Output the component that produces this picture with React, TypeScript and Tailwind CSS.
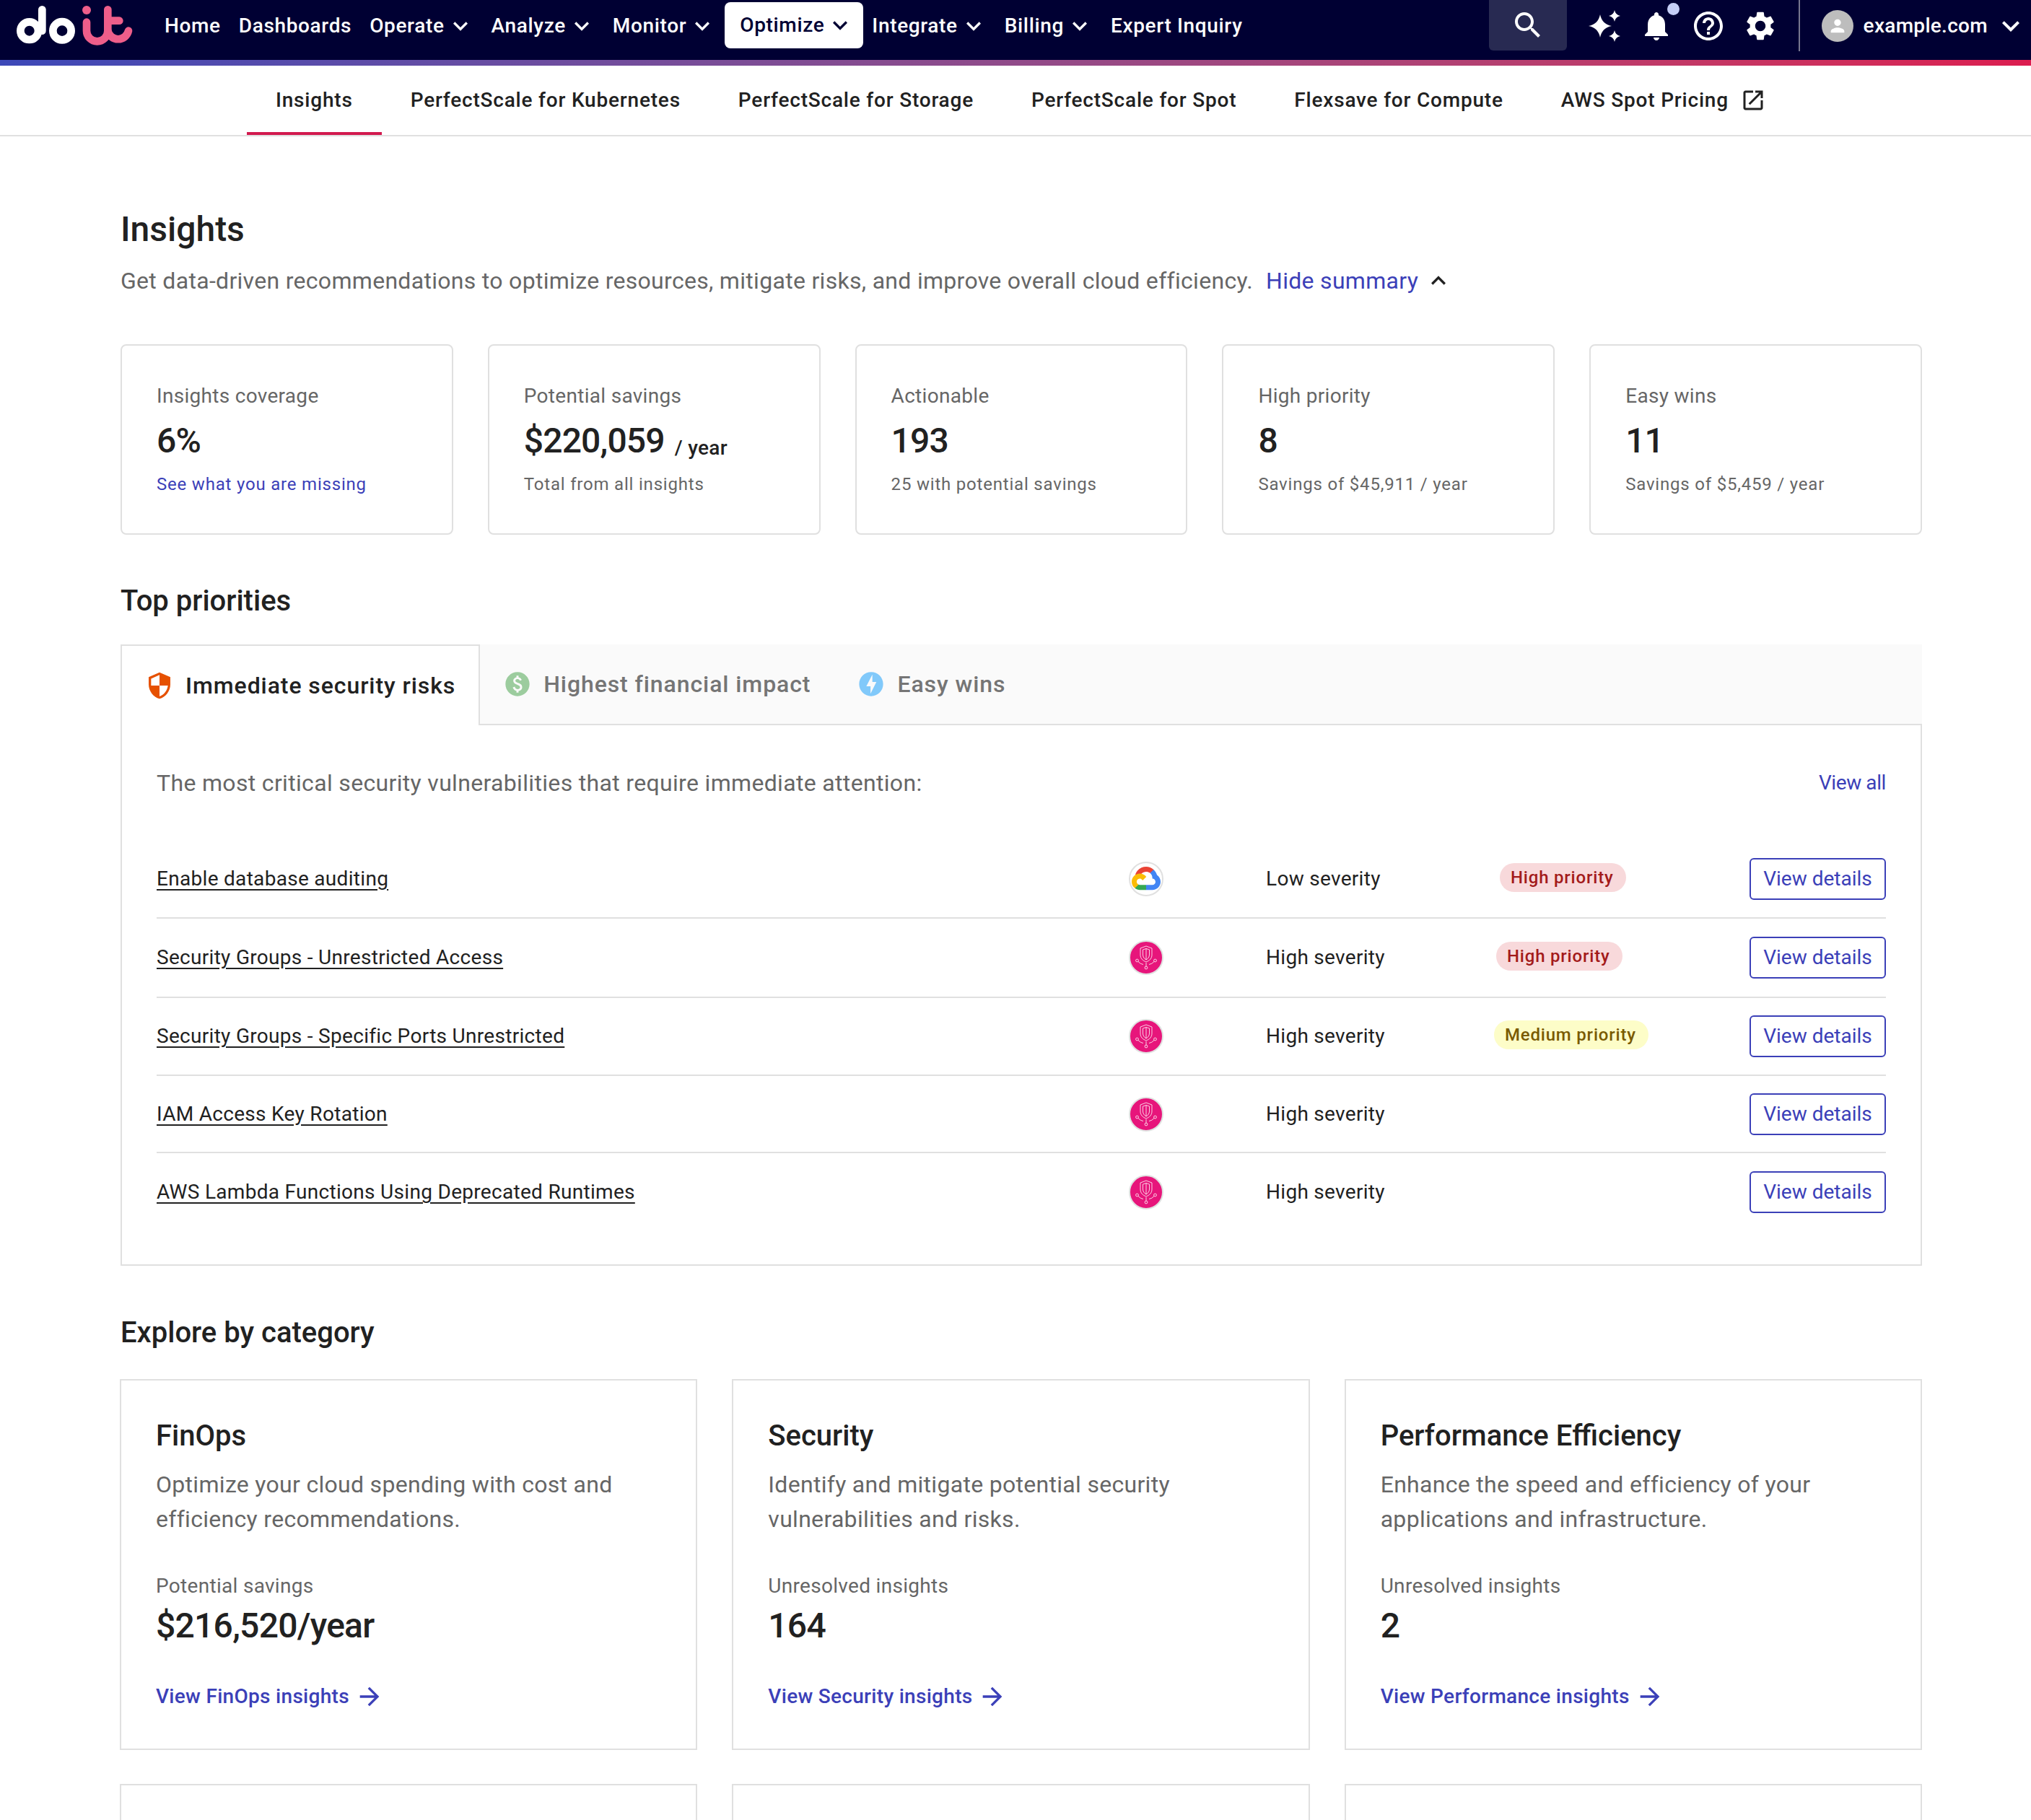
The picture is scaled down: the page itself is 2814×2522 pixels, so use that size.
import type { ReactNode } from "react"

const paths = {
  chevronDown: "M7.41 8.59 12 13.17l4.59-4.58L18 10l-6 6-6-6z",
  chevronUp: "M7.41 15.41 12 10.83l4.59 4.58L18 14l-6-6-6 6z",
  search:
    "M15.5 14h-.79l-.28-.27C15.41 12.59 16 11.11 16 9.5 16 5.91 13.09 3 9.5 3S3 5.91 3 9.5 5.91 16 9.5 16c1.61 0 3.09-.59 4.23-1.57l.27.28v.79l5 4.99L20.49 19zm-6 0C7.01 14 5 11.99 5 9.5S7.01 5 9.5 5 14 7.01 14 9.5 11.99 14 9.5 14",
  bell: "M12 22c1.1 0 2-.9 2-2h-4c0 1.1.89 2 2 2m6-6v-5c0-3.07-1.64-5.64-4.5-6.32V4c0-.83-.67-1.5-1.5-1.5s-1.5.67-1.5 1.5v.68C7.63 5.36 6 7.92 6 11v5l-2 2v1h16v-1z",
  help: "M11 18h2v-2h-2zm1-16C6.48 2 2 6.48 2 12s4.48 10 10 10 10-4.48 10-10S17.52 2 12 2m0 18c-4.41 0-8-3.59-8-8s3.59-8 8-8 8 3.59 8 8-3.59 8-8 8m0-14c-2.21 0-4 1.79-4 4h2c0-1.1.9-2 2-2s2 .9 2 2c0 2-3 1.75-3 5h2c0-2.25 3-2.5 3-5 0-2.21-1.79-4-4-4",
  gear: "M19.14 12.94c.04-.3.06-.61.06-.94 0-.32-.02-.64-.07-.94l2.03-1.58c.18-.14.23-.41.12-.61l-1.92-3.32c-.12-.22-.37-.29-.59-.22l-2.39.96c-.5-.38-1.03-.7-1.62-.94l-.36-2.54c-.04-.24-.24-.41-.48-.41h-3.84c-.24 0-.43.17-.47.41l-.36 2.54c-.59.24-1.13.57-1.62.94l-2.39-.96c-.22-.08-.47 0-.59.22L2.74 8.87c-.12.21-.08.47.12.61l2.03 1.58c-.05.3-.09.63-.09.94s.02.64.07.94l-2.03 1.58c-.18.14-.23.41-.12.61l1.92 3.32c.12.22.37.29.59.22l2.39-.96c.5.38 1.03.7 1.62.94l.36 2.54c.05.24.24.41.48.41h3.84c.24 0 .44-.17.47-.41l.36-2.54c.59-.24 1.13-.56 1.62-.94l2.39.96c.22.08.47 0 .59-.22l1.92-3.32c.12-.22.07-.47-.12-.61zM12 15.6c-1.98 0-3.6-1.62-3.6-3.6s1.62-3.6 3.6-3.6 3.6 1.62 3.6 3.6-1.62 3.6-3.6 3.6",
  person: "M12 12c2.21 0 4-1.79 4-4s-1.79-4-4-4-4 1.79-4 4 1.79 4 4 4m0 2c-2.67 0-8 1.34-8 4v2h16v-2c0-2.66-5.33-4-8-4",
  external: "M19 19H5V5h7V3H5c-1.11 0-2 .9-2 2v14c0 1.1.89 2 2 2h14c1.1 0 2-.9 2-2v-7h-2zM14 3v2h3.59l-9.83 9.83 1.41 1.41L19 6.41V10h2V3z",
  arrow: "M12 4l-1.41 1.41L16.17 11H4v2h12.17l-5.58 5.59L12 20l8-8z",
  shield: "M12 1 3 5v6c0 5.55 3.84 10.74 9 12 5.16-1.26 9-6.45 9-12V5zm0 10.99h7c-.53 4.12-3.28 7.79-7 8.94V12H5V6.3l7-3.11z",
  paid: "M12 2C6.48 2 2 6.48 2 12s4.48 10 10 10 10-4.48 10-10S17.52 2 12 2m.88 15.76V19h-1.75v-1.29c-.74-.18-2.39-.77-3.02-2.96l1.65-.67c.06.22.58 2.09 2.4 2.09.93 0 1.98-.48 1.98-1.61 0-.96-.7-1.46-2.28-2.03-1.1-.39-3.35-1.03-3.35-3.31 0-.1.01-2.4 2.62-2.96V5h1.75v1.24c1.84.32 2.51 1.79 2.66 2.24l-1.58.67c-.11-.35-.59-1.34-1.9-1.34-.7 0-1.81.37-1.81 1.39 0 .95.86 1.31 2.64 1.9 2.4.83 3.01 2.05 3.01 3.45 0 2.63-2.5 3.13-3.02 3.22",
  bolt: "M12 2.02c-5.51 0-9.98 4.47-9.98 9.98s4.47 9.98 9.98 9.98 9.98-4.47 9.98-9.98S17.51 2.02 12 2.02M11.48 20v-6.26H8L13 4v6.26h3.35z",
}

function Icon({ d, className }: { d: string; className: string }) {
  return (
    <svg viewBox="0 0 24 24" fill="currentColor" className={className}>
      <path d={d} />
    </svg>
  )
}

function Logo() {
  return (
    <svg viewBox="0 0 570 228" className="h-[76px] w-[190px]" fill="none" strokeLinecap="round" strokeWidth="32">
      <g stroke="#ffffff">
        <circle cx="92" cy="128" r="37" />
        <path d="M145 40V128" />
        <circle cx="228" cy="128" r="38" />
      </g>
      <circle cx="330" cy="42" r="18" fill="#ee5e8a" />
      <g stroke="#ee5e8a">
        <path d="M330 92V128a44 44 0 0 0 88 0V40" />
        <path d="M418 86H466" />
        <path d="M418 128a44 44 0 0 0 86 0" />
      </g>
    </svg>
  )
}

function Sparkles() {
  const star = (x: number, y: number, r: number) => {
    const c = r * 0.16
    return `M${x} ${y - r}Q${x + c} ${y - c} ${x + r} ${y}Q${x + c} ${y + c} ${x} ${y + r}Q${x - c} ${y + c} ${x - r} ${y}Q${x - c} ${y - c} ${x} ${y - r}Z`
  }
  return (
    <svg viewBox="0 0 48 48" fill="#ffffff" className="h-[48px] w-[48px]">
      <path d={star(18, 24, 16)} />
      <path d={star(38, 10, 8)} />
      <path d={star(38, 38, 8)} />
    </svg>
  )
}

function GoogleCloud() {
  return (
    <div className="flex h-[48px] w-[48px] items-center justify-center rounded-full border-2 border-[#e0e0e0] bg-white">
      <svg viewBox="0 0 256 206" className="w-[40px]">
        <path fill="#ea4335" d="M170.25 56.82l22.25-22.25 1.49-9.37C153.44-11.68 88.98-7.5 52.42 33.92 42.27 45.42 34.73 59.76 30.72 74.57l7.97-1.12 44.5-7.34 3.44-3.51c19.8-21.74 53.27-24.67 76.13-6.17z" />
        <path fill="#4285f4" d="M224.2 73.92c-5.11-18.84-15.62-35.77-30.22-48.72l-31.23 31.23c13.19 10.78 20.7 27.01 20.38 44.04v5.54c15.35 0 27.8 12.45 27.8 27.8 0 15.35-12.45 27.48-27.8 27.48h-55.67l-5.47 5.93v33.34l5.47 5.23h55.67c39.93.31 72.55-31.49 72.86-71.42.19-24.2-11.74-46.89-31.79-60.45" />
        <path fill="#34a853" d="M71.87 205.8h55.59v-44.51H71.87c-3.96 0-7.8-.85-11.4-2.5l-7.89 2.42-22.41 22.25-1.95 7.57c12.57 9.49 27.9 14.83 43.65 14.77" />
        <path fill="#fbbc05" d="M71.87 61.43C31.94 61.66-.24 94.23 0 134.16c.13 22.3 10.55 43.29 28.22 56.88l32.25-32.25c-13.99-6.32-20.21-22.79-13.89-36.78 6.32-13.99 22.79-20.21 36.78-13.89 6.16 2.79 11.1 7.72 13.89 13.89l32.25-32.25c-13.72-17.94-35.04-28.42-57.62-28.34" />
      </svg>
    </div>
  )
}

function SecurityHub() {
  return (
    <div className="flex h-[48px] w-[48px] items-center justify-center rounded-full border-2 border-[#e0e0e0] bg-[#e7157b]">
      <svg viewBox="0 0 44 44" className="h-[44px] w-[44px]" fill="none" stroke="#ffffff" strokeWidth="0.8">
        <path d="M14 9L22 6L30 9V18C30 23 27 26 22 28C17 26 14 23 14 18Z" />
        <path d="M17.500 11L22 9.500L26.500 11V18C26.500 21 24.500 23.500 22 25C19.500 23.500 17.500 21 17.500 18Z" />
        <path d="M22 9.500V25" />
        <path d="M11 27.500Q14 31 18 31.500M33 27.500Q30 31 26 31.500M22 29V34" />
        <circle cx="9.500" cy="26" r="1.900" />
        <circle cx="34.500" cy="26" r="1.900" />
        <circle cx="22" cy="36" r="1.900" />
      </svg>
    </div>
  )
}

const navItems = [
  { label: "Home" },
  { label: "Dashboards" },
  { label: "Operate", menu: true },
  { label: "Analyze", menu: true },
  { label: "Monitor", menu: true },
  { label: "Optimize", menu: true, active: true },
  { label: "Integrate", menu: true },
  { label: "Billing", menu: true },
  { label: "Expert Inquiry" },
]

const subTabs = ["PerfectScale for Kubernetes", "PerfectScale for Storage", "PerfectScale for Spot", "Flexsave for Compute"]

const stats: { label: string; value: string; unit?: string; note: string; link?: boolean }[] = [
  { label: "Insights coverage", value: "6%", note: "See what you are missing", link: true },
  { label: "Potential savings", value: "$220,059", unit: "/ year", note: "Total from all insights" },
  { label: "Actionable", value: "193", note: "25 with potential savings" },
  { label: "High priority", value: "8", note: "Savings of $45,911 / year" },
  { label: "Easy wins", value: "11", note: "Savings of $5,459 / year" },
]

const risks = [
  { name: "Enable database auditing", gcp: true, severity: "Low severity", priority: "High priority", chip: "ml-[8px] bg-[#f8d9db] text-[#a31a1a]", row: "h-[109px]" },
  { name: "Security Groups - Unrestricted Access", severity: "High severity", priority: "High priority", chip: "ml-[3px] bg-[#f8d9db] text-[#a31a1a]", row: "h-[110px]" },
  { name: "Security Groups - Specific Ports Unrestricted", severity: "High severity", priority: "Medium priority", chip: "bg-[#fdfdc8] text-[#7a5a00]", row: "h-[108px]" },
  { name: "IAM Access Key Rotation", severity: "High severity", row: "h-[107px]" },
  { name: "AWS Lambda Functions Using Deprecated Runtimes", severity: "High severity", row: "h-[108px]" },
]

const categories = [
  { title: "FinOps", text: ["Optimize your cloud spending with cost and", "efficiency recommendations."], label: "Potential savings", value: "$216,520/year", link: "View FinOps insights" },
  { title: "Security", text: ["Identify and mitigate potential security", "vulnerabilities and risks."], label: "Unresolved insights", value: "164", link: "View Security insights" },
  { title: "Performance Efficiency", text: ["Enhance the speed and efficiency of your", "applications and infrastructure."], label: "Unresolved insights", value: "2", link: "View Performance insights" },
]

function TabLabel({ icon, children, className }: { icon: ReactNode; children: ReactNode; className: string }) {
  return (
    <div className={`flex items-center gap-[16px] px-[32px] text-[32px] leading-[48px] font-medium tracking-[0.92px] ${className}`}>
      {icon}
      {children}
    </div>
  )
}

export default function App() {
  return (
    <div className="h-[2522px] overflow-hidden bg-white font-['Roboto',sans-serif] text-[#212121]">
      <header className="h-[83px] bg-[#000033]">
        <div className="flex h-[71px] items-center">
          <div className="ml-[10px] h-[71px] w-[206px] self-start">
            <Logo />
          </div>
          {navItems.map((item) => (
            <div
              key={item.label}
              className={
                item.active
                  ? "mt-[3px] flex h-[64px] items-center self-start rounded-[8px] bg-white pr-[12px] pl-[21px] text-[28px] font-medium tracking-[0.65px] text-[#000033]"
                  : item.menu
                    ? "flex items-center pr-[11px] pl-[12px] text-[28px] font-medium tracking-[0.65px] text-white"
                    : "flex items-center pr-[13px] pl-[12px] text-[28px] font-medium tracking-[0.65px] text-white"
              }
            >
              {item.label}
              {item.menu && <Icon d={paths.chevronDown} className="ml-[2px] h-[40px] w-[40px]" />}
            </div>
          ))}
          <div className="ml-auto flex h-[71px] items-center text-white">
            <div className="flex h-[70px] w-[108px] items-center justify-center self-start rounded-b-[6px] bg-[#282a52]">
              <Icon d={paths.search} className="h-[48px] w-[48px]" />
            </div>
            <div className="ml-[28px] flex items-center gap-[24px]">
              <Sparkles />
              <div className="relative h-[48px] w-[48px]">
                <Icon d={paths.bell} className="h-[48px] w-[48px]" />
                <div className="absolute top-[-8px] left-[39px] h-[17px] w-[17px] rounded-full bg-[#c5cef7]" />
              </div>
              <Icon d={paths.help} className="h-[48px] w-[48px]" />
              <Icon d={paths.gear} className="h-[48px] w-[48px]" />
            </div>
            <div className="mr-[30px] ml-[29px] h-[71px] w-[2px] bg-[#77778f]" />
            <div className="flex h-[44px] w-[44px] items-center justify-center overflow-hidden rounded-full bg-[#bdbdbd]">
              <Icon d={paths.person} className="h-[28px] w-[28px] text-white" />
            </div>
            <span className="ml-[14px] text-[28px] font-medium tracking-[0.3px]">example.com</span>
            <Icon d={paths.chevronDown} className="mr-[4px] ml-[8px] h-[48px] w-[48px]" />
          </div>
        </div>
      </header>
      <div className="h-[8px] bg-linear-to-r from-[#3c48b8] to-[#dc1c4f]" />

      <nav className="flex h-[98px] border-b-2 border-[#e0e0e0] pl-[342px] text-[28px] font-medium tracking-[0.8px] text-[#212121]">
        <div className="flex h-[96px] items-center border-b-4 border-[#d21a4f] px-[40px] pt-[4px]">Insights</div>
        {subTabs.map((tab) => (
          <div key={tab} className="flex h-[96px] items-center px-[40px]">
            {tab}
          </div>
        ))}
        <div className="flex h-[96px] items-center px-[40px]">
          AWS Spot Pricing
          <Icon d={paths.external} className="ml-[16px] h-[36px] w-[36px]" />
        </div>
      </nav>

      <main className="ml-[167px] w-[2496px] pt-[101px]">
        <h1 className="text-[48px] leading-[56px] font-medium">Insights</h1>
        <div className="mt-[19px] flex items-center text-[32px] leading-[48px] tracking-[0.3px] text-[#666666]">
          Get data-driven recommendations to optimize resources, mitigate risks, and improve overall cloud efficiency.
          <span className="ml-[18px] text-[#3b40b8]">Hide summary</span>
          <Icon d={paths.chevronUp} className="ml-[8px] h-[40px] w-[40px] text-[#212121]" />
        </div>

        <section className="mt-[64px] grid grid-cols-5 gap-[48px]">
          {stats.map((stat) => (
            <div key={stat.label} className="h-[264px] rounded-[8px] border-2 border-[#e0e0e0] p-[48px]">
              <div className="mt-[2px] text-[28px] leading-[40px] tracking-[0.3px] text-[#666666]">{stat.label}</div>
              <div className="mt-[14px] flex items-baseline text-[48px] leading-[56px] font-medium tracking-[-0.85px]">
                {stat.value}
                {stat.unit && <span className="ml-[14px] translate-y-[3px] text-[28px] leading-[40px] tracking-[0.3px]">{stat.unit}</span>}
              </div>
              <div className={`mt-[14px] text-[24px] leading-[36px] tracking-[0.8px] ${stat.link ? "text-[#3b40b8]" : "text-[#666666]"}`}>
                {stat.note}
              </div>
            </div>
          ))}
        </section>

        <h2 className="mt-[64px] text-[40px] leading-[56px] font-medium">Top priorities</h2>

        <div className="mt-[32px]">
          <div className="flex h-[112px]">
            <div className="flex items-center border-x-2 border-t-2 border-[#e0e0e0] bg-white">
              <TabLabel icon={<Icon d={paths.shield} className="h-[40px] w-[40px] text-[#e65100]" />} className="text-[#212121]">
                Immediate security risks
              </TabLabel>
            </div>
            <div className="flex flex-1 items-center border-b-2 border-[#e0e0e0] bg-[#fafafa]">
              <TabLabel icon={<Icon d={paths.paid} className="h-[40px] w-[40px] text-[#9ccc9e]" />} className="text-[#757575]">
                Highest financial impact
              </TabLabel>
              <TabLabel icon={<Icon d={paths.bolt} className="h-[40px] w-[40px] text-[#81c9fa]" />} className="text-[#757575]">
                Easy wins
              </TabLabel>
            </div>
          </div>
          <div className="h-[749px] border-x-2 border-b-2 border-[#e0e0e0] px-[48px] pt-[56px]">
            <div className="flex items-center justify-between">
              <span className="text-[32px] leading-[48px] tracking-[0.33px] text-[#666666]">
                The most critical security vulnerabilities that require immediate attention:
              </span>
              <span className="text-[28px] tracking-[-0.4px] text-[#3b40b8]">View all</span>
            </div>
            <div className="mt-[55px]">
              {risks.map((risk, i) => (
                <div
                  key={risk.name}
                  className={`grid grid-cols-[1347px_190px_316px_1fr_auto] items-center text-[28px] tracking-[0.3px] ${risk.row} ${i < risks.length - 1 ? "border-b-2 border-[#e0e0e0]" : ""}`}
                >
                  <span className="underline underline-offset-[5px]">{risk.name}</span>
                  {risk.gcp ? <GoogleCloud /> : <SecurityHub />}
                  <span>{risk.severity}</span>
                  <div>
                    {risk.priority && (
                      <span className={`mb-[6px] inline-flex h-[40px] items-center rounded-full pr-[17px] pl-[15px] text-[24px] font-medium tracking-[0.8px] ${risk.chip}`}>
                        {risk.priority}
                      </span>
                    )}
                  </div>
                  <button className="flex h-[58px] w-[189px] items-center justify-center rounded-[6px] border-2 border-[#3b40b8] bg-white tracking-normal text-[#3b40b8]">
                    View details
                  </button>
                </div>
              ))}
            </div>
          </div>
        </div>

        <h2 className="mt-[65px] text-[40px] leading-[56px] font-medium">Explore by category</h2>

        <section className="mt-[36px] -ml-[1px] grid grid-cols-3 gap-x-[48px] gap-y-[47px]">
          {categories.map((cat) => (
            <div key={cat.title} className="h-[514px] border-2 border-[#e0e0e0] px-[48px] pt-[49px]">
              <h3 className="text-[40px] leading-[56px] font-medium">{cat.title}</h3>
              <p className="mt-[15px] text-[32px] leading-[48px] tracking-[0.3px] text-[#666666]">
                {cat.text[0]}
                <br />
                {cat.text[1]}
              </p>
              <div className="mt-[49px] text-[28px] leading-[40px] tracking-[0.3px] text-[#666666]">{cat.label}</div>
              <div className="mt-[7px] text-[48px] leading-[56px] font-medium tracking-[-0.75px]">{cat.value}</div>
              <div className="mt-[50px] flex items-center text-[28px] leading-[40px] font-medium tracking-[0.3px] text-[#3b40b8]">
                {cat.link}
                <Icon d={paths.arrow} className="ml-[8px] h-[40px] w-[40px]" />
              </div>
            </div>
          ))}
          <div className="h-[514px] border-2 border-[#e0e0e0]" />
          <div className="h-[514px] border-2 border-[#e0e0e0]" />
          <div className="h-[514px] border-2 border-[#e0e0e0]" />
        </section>
      </main>
    </div>
  )
}
